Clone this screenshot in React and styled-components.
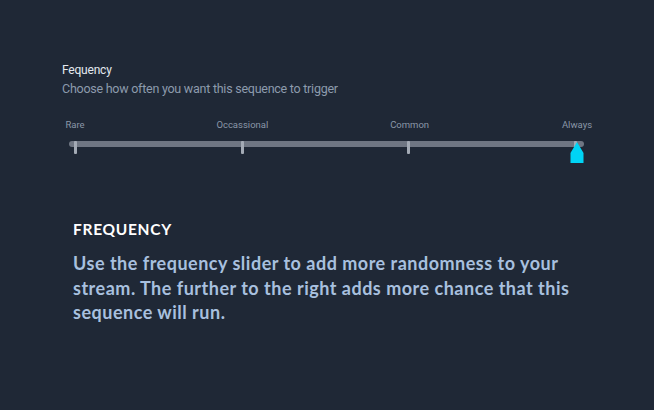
import React from 'react'
import styled, { createGlobalStyle } from 'styled-components'

const Global = createGlobalStyle`
  html, body { margin: 0; padding: 0; background: #1f2836; }
`

const Page = styled.div`
  width: 654px;
  height: 410px;
  background: #1f2836;
  box-sizing: border-box;
  padding: 62px 0 0 62px;
`

const Setting = styled.div`
  font-family: Roboto, "Liberation Sans", sans-serif;
`

const Title = styled.div`
  color: #e3e8ef;
  font-size: 12px;
  line-height: 16px;
  letter-spacing: -0.2px;
`

const Subtitle = styled.div`
  color: #8d9bad;
  font-size: 12.5px;
  line-height: 16px;
  margin-top: 3px;
  letter-spacing: -0.25px;
`

const Slider = styled.div`
  width: 515px;
  margin: 21px 0 0 7px;
`

const Labels = styled.div`
  display: flex;
  justify-content: space-between;
  padding: 0 7px 0 6px;
  height: 14px;
`

const Label = styled.span`
  width: 0;
  display: flex;
  justify-content: center;
  white-space: nowrap;
  color: #8a97a8;
  font-size: 9.5px;
  line-height: 14px;
`

const Track = styled.div`
  position: relative;
  height: 6px;
  border-radius: 3px;
  background: #6f7683;
  margin-top: 9px;
`

const Ticks = styled.div`
  position: absolute;
  top: 0;
  left: 6px;
  right: 7px;
  display: flex;
  justify-content: space-between;
`

const Tick = styled.div`
  width: 3px;
  height: 13px;
  margin-left: -1px;
  border-radius: 1px;
  background: #a3aab5;
`

const Thumb = styled.svg`
  position: absolute;
  left: ${p => p.$at}px;
  top: 1px;
`

const Help = styled.div`
  margin: 72px 0 0 11px;
  font-family: Lato, "Open Sans", sans-serif;
  font-weight: 700;
`

const HelpTitle = styled.div`
  color: #ffffff;
  font-size: 15.5px;
  line-height: 20px;
  letter-spacing: 0.7px;
`

const HelpText = styled.p`
  margin: 12px 0 0;
  width: 500px;
  color: #a8c0df;
  font-size: 18px;
  line-height: 24.5px;
  letter-spacing: 0.5px;
`

const stops = ['Rare', 'Occassional', 'Common', 'Always']

export default function App() {
  return (
    <Page>
      <Global />
      <Setting>
        <Title>Fequency</Title>
        <Subtitle>Choose how often you want this sequence to trigger</Subtitle>
        <Slider>
          <Labels>
            {stops.map(s => <Label key={s}>{s}</Label>)}
          </Labels>
          <Track>
            <Ticks>
              {stops.map(s => <Tick key={s} />)}
            </Ticks>
            <Thumb $at={501} width="14" height="21" viewBox="0 0 14 21">
              <path d="M7 0 L13.5 11 L13.5 21 L0.5 21 L0.5 11 Z" fill="#00d4f5" />
            </Thumb>
          </Track>
        </Slider>
      </Setting>
      <Help>
        <HelpTitle>FREQUENCY</HelpTitle>
        <HelpText>
          Use the frequency slider to add more randomness to your stream. The further to the right adds more chance that this sequence will run.
        </HelpText>
      </Help>
    </Page>
  )
}
